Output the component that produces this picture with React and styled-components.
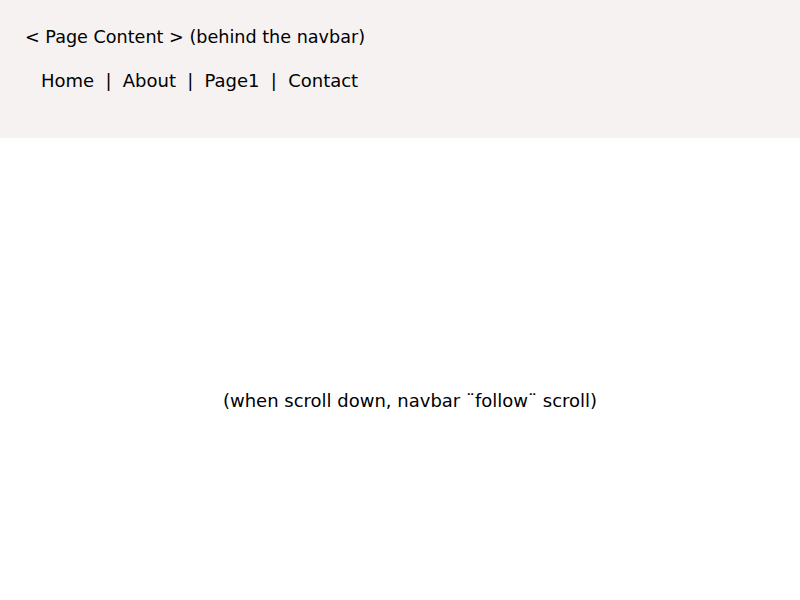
import React from "react";
import styled, { createGlobalStyle } from "styled-components";

const Global = createGlobalStyle`
  html, body { margin: 0; padding: 0; background: #ffffff; }
  body { font-family: "DejaVu Sans", sans-serif; font-size: 18px; color: #000; }
`;

const Header = styled.header`
  background: #f6f2f1;
  height: 138px;
  box-sizing: border-box;
  padding: 27px 25px 0;
  display: flex;
  flex-direction: column;
  gap: 22px;
`;

const Title = styled.div`
  font-size: 17.6px;
  line-height: 21px;
`;

const Nav = styled.nav`
  display: flex;
  align-items: center;
  padding-left: 16px;
  line-height: 21px;
`;

const NavLink = styled.span`
  color: #000;
`;

const Sep = styled.span`
  padding: 0 11.25px;
`;

const Main = styled.main`
  padding: 252px 0 0 20px;
  text-align: center;
  line-height: 21px;
`;

const links = ["Home", "About", "Page1", "Contact"];

export default function App() {
  return (
    <>
      <Global />
      <Header>
        <Title>&lt; Page Content &gt; (behind the navbar)</Title>
        <Nav>
          {links.map((l, i) => (
            <React.Fragment key={l}>
              {i > 0 && <Sep>|</Sep>}
              <NavLink>{l}</NavLink>
            </React.Fragment>
          ))}
        </Nav>
      </Header>
      <Main>(when scroll down, navbar ¨follow¨ scroll)</Main>
    </>
  );
}
